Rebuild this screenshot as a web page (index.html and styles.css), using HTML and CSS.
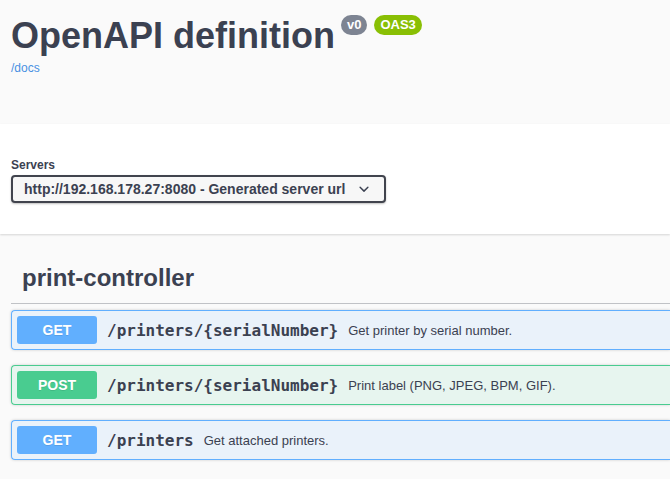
FILE: index.html
```html
<!DOCTYPE html>
<html>
<head>
<meta charset="utf-8">
<link rel="stylesheet" href="styles.css">
</head>
<body>
<div class="info">
  <div class="title-row">
    <h2 class="title">OpenAPI definition</h2>
    <span class="badge badge-version">v0</span>
    <span class="badge badge-oas">OAS3</span>
  </div>
  <a class="docs-link" href="#">/docs</a>
</div>
<div class="scheme">
  <div class="servers-label">Servers</div>
  <div class="select">
    <span class="select-text">http://192.168.178.27:8080 - Generated server url</span>
    <svg class="chevron" viewBox="0 0 20 20" width="20" height="20"><path fill="#3b4151" d="M13.418 7.859a.695.695 0 01.978 0 .68.68 0 010 .969l-3.908 3.83a.697.697 0 01-.979 0l-3.908-3.83a.68.68 0 010-.969.695.695 0 01.978 0L10 11z"/></svg>
  </div>
</div>
<div class="tag-section">
  <h3 class="tag">print-controller</h3>
  <div class="opblock get">
    <span class="method">GET</span>
    <span class="path">/printers/{serialNumber}</span>
    <span class="desc">Get printer by serial number.</span>
  </div>
  <div class="opblock post">
    <span class="method">POST</span>
    <span class="path">/printers/{serialNumber}</span>
    <span class="desc">Print label (PNG, JPEG, BPM, GIF).</span>
  </div>
  <div class="opblock get">
    <span class="method">GET</span>
    <span class="path">/printers</span>
    <span class="desc">Get attached printers.</span>
  </div>
</div>
</body>
</html>
```
FILE: styles.css
```css
html, body {
  margin: 0;
  padding: 0;
}
body {
  background: #fafafa;
  font-family: "Liberation Sans", Arial, sans-serif;
  color: #3b4151;
}
.info {
  box-sizing: border-box;
  height: 124px;
  padding: 14px 11px 0;
}
.title-row {
  display: flex;
  align-items: flex-start;
}
.title {
  margin: 0;
  font-size: 36px;
  line-height: 43px;
  font-weight: 700;
  color: #3b4151;
}
.badge {
  margin-top: 1px;
  height: 20px;
  line-height: 20px;
  padding: 0 6px;
  border-radius: 57px;
  color: #fff;
  font-size: 13px;
  font-weight: 700;
}
.badge-version {
  margin-left: 6px;
  background: #7d8492;
}
.badge-oas {
  margin-left: 7px;
  background: #89bf04;
}
.docs-link {
  display: block;
  margin-top: 4px;
  font-size: 12px;
  line-height: 14px;
  color: #4990e2;
  text-decoration: none;
}
.scheme {
  background: #fff;
  box-shadow: 0 1px 2px 0 rgba(0,0,0,.15);
  padding: 34px 11px 31px;
}
.servers-label {
  font-size: 12px;
  line-height: 15px;
  font-weight: 700;
  margin-bottom: 2px;
}
.select {
  box-sizing: border-box;
  width: 375px;
  height: 28px;
  border: 2px solid #41444e;
  border-radius: 4px;
  background: #f7f7f7;
  box-shadow: 0 1px 2px 0 rgba(0,0,0,.25);
  display: flex;
  align-items: center;
  padding: 0 10px 0 11px;
}
.select-text {
  flex: 1;
  font-size: 14px;
  font-weight: 700;
  color: #3b4151;
  white-space: nowrap;
}
.chevron {
  flex: none;
}
.tag-section {
  margin: 18px 0 0 11px;
}
.tag {
  margin: 0 0 6px;
  padding: 10px 20px 10px 11px;
  font-size: 24px;
  line-height: 31px;
  font-weight: 700;
  border-bottom: 1px solid rgba(59,65,81,.3);
}
.opblock {
  display: flex;
  align-items: center;
  padding: 5px;
  margin-bottom: 15px;
  border: 1px solid;
  border-right-width: 0;
  border-radius: 4px 0 0 4px;
  box-shadow: 0 0 3px rgba(0,0,0,.19);
  white-space: nowrap;
}
.opblock.get {
  border-color: #61affe;
  background: rgba(97,175,254,.1);
}
.opblock.post {
  border-color: #49cc90;
  background: rgba(73,204,144,.1);
}
.method {
  width: 80px;
  height: 28px;
  line-height: 28px;
  text-align: center;
  border-radius: 3px;
  color: #fff;
  font-size: 14px;
  font-weight: 700;
  text-shadow: 0 1px 0 rgba(0,0,0,.1);
}
.get .method { background: #61affe; }
.post .method { background: #49cc90; }
.path {
  margin-left: 10px;
  font-family: "DejaVu Sans Mono", monospace;
  font-size: 16px;
  font-weight: 700;
  color: #3b4151;
}
.desc {
  margin-left: 10px;
  font-size: 13px;
  color: #3b4151;
}
```
